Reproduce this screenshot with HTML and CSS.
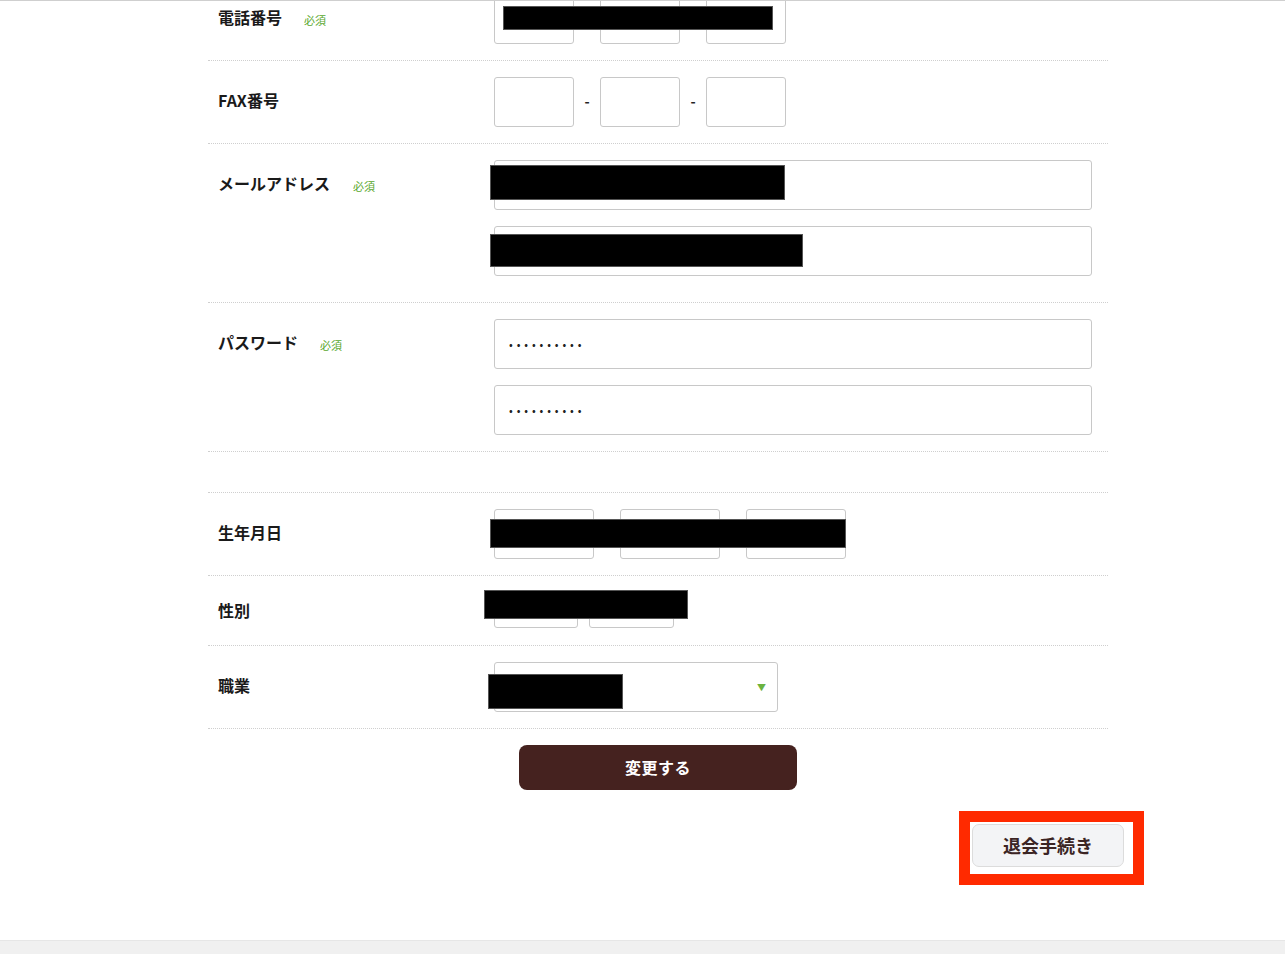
FILE: index.html
```html
<!DOCTYPE html>
<html lang="ja">
<head>
<meta charset="utf-8">
<title>会員情報変更</title>
<link rel="stylesheet" href="styles.css">
</head>
<body>
<div class="topline"></div>
<main class="page">
  <div class="form">
    <div class="row row-first">
      <div class="label">電話番号<span class="req">必須</span></div>
      <div class="value">
        <div class="tel redact-wrap">
          <input class="box small" type="text">
          <span class="dash"></span>
          <input class="box small" type="text">
          <span class="dash"></span>
          <input class="box small" type="text">
          <span class="redact r-tel"></span>
        </div>
      </div>
    </div>
    <div class="row">
      <div class="label">FAX番号</div>
      <div class="value">
        <div class="tel">
          <input class="box small" type="text">
          <span class="dash">-</span>
          <input class="box small" type="text">
          <span class="dash">-</span>
          <input class="box small" type="text">
        </div>
      </div>
    </div>
    <div class="row">
      <div class="label">メールアドレス<span class="req req-wide">必須</span></div>
      <div class="value value-mail">
        <div class="stack redact-wrap">
          <input class="box wide" type="text">
          <input class="box wide" type="text">
          <span class="redact r-mail1"></span>
          <span class="redact r-mail2"></span>
        </div>
      </div>
    </div>
    <div class="row">
      <div class="label">パスワード<span class="req">必須</span></div>
      <div class="value">
        <div class="stack">
          <input class="box wide pw" type="password" value="1234567890">
          <input class="box wide pw" type="password" value="1234567890">
        </div>
      </div>
    </div>
    <div class="row row-empty">
      <div class="label"></div>
      <div class="value"></div>
    </div>
    <div class="row">
      <div class="label">生年月日</div>
      <div class="value">
        <div class="birth redact-wrap">
          <input class="box mid" type="text">
          <input class="box mid" type="text">
          <input class="box mid" type="text">
          <span class="redact r-birth"></span>
        </div>
      </div>
    </div>
    <div class="row">
      <div class="label label-short">性別</div>
      <div class="value value-gender">
        <div class="gender redact-wrap">
          <span class="gbox"></span>
          <span class="gbox"></span>
          <span class="redact r-gender"></span>
        </div>
      </div>
    </div>
    <div class="row">
      <div class="label">職業</div>
      <div class="value">
        <div class="select redact-wrap">
          <span class="arrow">▼</span>
          <span class="redact r-job"></span>
        </div>
      </div>
    </div>
    <div class="submit-row">
      <button class="submit" type="button">変更する</button>
    </div>
  </div>
  <div class="withdraw-row">
    <div class="withdraw-wrap">
      <button class="withdraw" type="button">退会手続き</button>
      <span class="highlight"></span>
    </div>
  </div>
</main>
<footer class="footer"></footer>
</body>
</html>
```

FILE: styles.css
```css
* { box-sizing: border-box; }
html, body { margin: 0; padding: 0; background: #fff; }
body {
  font-family: "Noto Sans CJK JP", "Noto Sans", sans-serif;
  color: #222;
  overflow: hidden;
  height: 954px;
  position: relative;
}
.topline {
  height: 1px;
  background: #cfcfcf;
  position: relative;
  z-index: 2;
}
.page {
  margin-top: -23px;
}
.form {
  width: 900px;
  margin-left: 208px;
}
.row {
  display: flex;
  border-bottom: 1px dotted #cfcfcf;
}
.label {
  width: 270px;
  padding: 14px 0 0 10px;
  font-size: 16px;
  font-weight: 700;
  line-height: 50px;
  color: #1a1a1a;
  display: flex;
  align-items: flex-start;
  white-space: nowrap;
}
.label-short { line-height: 36px; padding-top: 16px; }
.req {
  font-size: 11px;
  font-weight: 400;
  color: #5aa82e;
  margin-left: 22px;
  padding-top: 3px;
}
.req-wide { margin-left: 23px; }
.value {
  flex: 1;
  padding: 16px;
}
.value-mail { padding-bottom: 26px; }
.value-gender { padding-bottom: 17px; }
.row-empty .label, .row-empty .value { padding: 0; height: 40px; }
.stack {
  display: flex;
  flex-direction: column;
  gap: 16px;
}
.redact-wrap { position: relative; }
.box {
  display: block;
  height: 50px;
  border: 1px solid #c8c8c8;
  border-radius: 3px;
  background: #fff;
  font: inherit;
  margin: 0;
  padding: 0 14px;
  outline: none;
}
.small { width: 80px; }
.mid { width: 100px; }
.wide { width: 598px; }
.pw {
  font-size: 11px;
  letter-spacing: 3.9px;
  color: #222;
}
.tel {
  display: flex;
  align-items: center;
}
.dash {
  width: 26px;
  text-align: center;
  font-size: 14px;
  font-weight: 700;
  line-height: 1;
  color: #222;
  padding-bottom: 3px;
}
.birth {
  display: flex;
  gap: 26px;
}
.gender {
  display: flex;
  gap: 11px;
  height: 36px;
}
.gbox {
  display: block;
  width: 84px;
  height: 36px;
  border: 1px solid #c8c8c8;
  border-radius: 3px;
}
.gbox + .gbox { width: 85px; }
.select {
  width: 284px;
  height: 50px;
  border: 1px solid #c8c8c8;
  border-radius: 3px;
  display: flex;
  align-items: center;
  justify-content: flex-end;
  padding-right: 11px;
}
.arrow {
  color: #6cb33f;
  font-size: 9px;
  line-height: 1;
}
.redact {
  position: absolute;
  background: #000;
  border: 1px solid #555;
  z-index: 1;
}
.r-tel { left: 9px; top: 12px; width: 270px; height: 24px; }
.r-mail1 { left: -4px; top: 5px; width: 295px; height: 35px; }
.r-mail2 { left: -4px; top: 74px; width: 313px; height: 33px; }
.r-birth { left: -4px; top: 10px; width: 356px; height: 29px; }
.r-gender { left: -10px; top: -2px; width: 204px; height: 29px; }
.r-job { left: -7px; top: 11px; width: 135px; height: 35px; }
.submit-row {
  display: flex;
  justify-content: center;
  padding-top: 16px;
}
.submit {
  width: 278px;
  height: 45px;
  background: #45221f;
  color: #fff;
  border: none;
  border-radius: 8px;
  font: inherit;
  font-size: 16px;
  font-weight: 700;
  letter-spacing: 0.5px;
  padding-bottom: 2px;
}
.withdraw-row {
  display: flex;
  justify-content: flex-end;
  padding-right: 161px;
  padding-top: 34px;
}
.withdraw-wrap { position: relative; }
.withdraw {
  display: block;
  width: 152px;
  height: 43px;
  background: #f3f4f6;
  border: 1px solid #dcdcdc;
  border-radius: 7px;
  color: #3b2524;
  font: inherit;
  font-size: 18px;
  font-weight: 700;
  padding: 0 0 2px 0;
}
.highlight {
  position: absolute;
  left: -13px;
  top: -13px;
  width: 185px;
  height: 74px;
  border: 11px solid #ff2a00;
  pointer-events: none;
}
.footer {
  position: absolute;
  left: 0;
  right: 0;
  top: 940px;
  height: 14px;
  background: #f0f0f0;
  border-top: 1px solid #e6e6e6;
}
```
